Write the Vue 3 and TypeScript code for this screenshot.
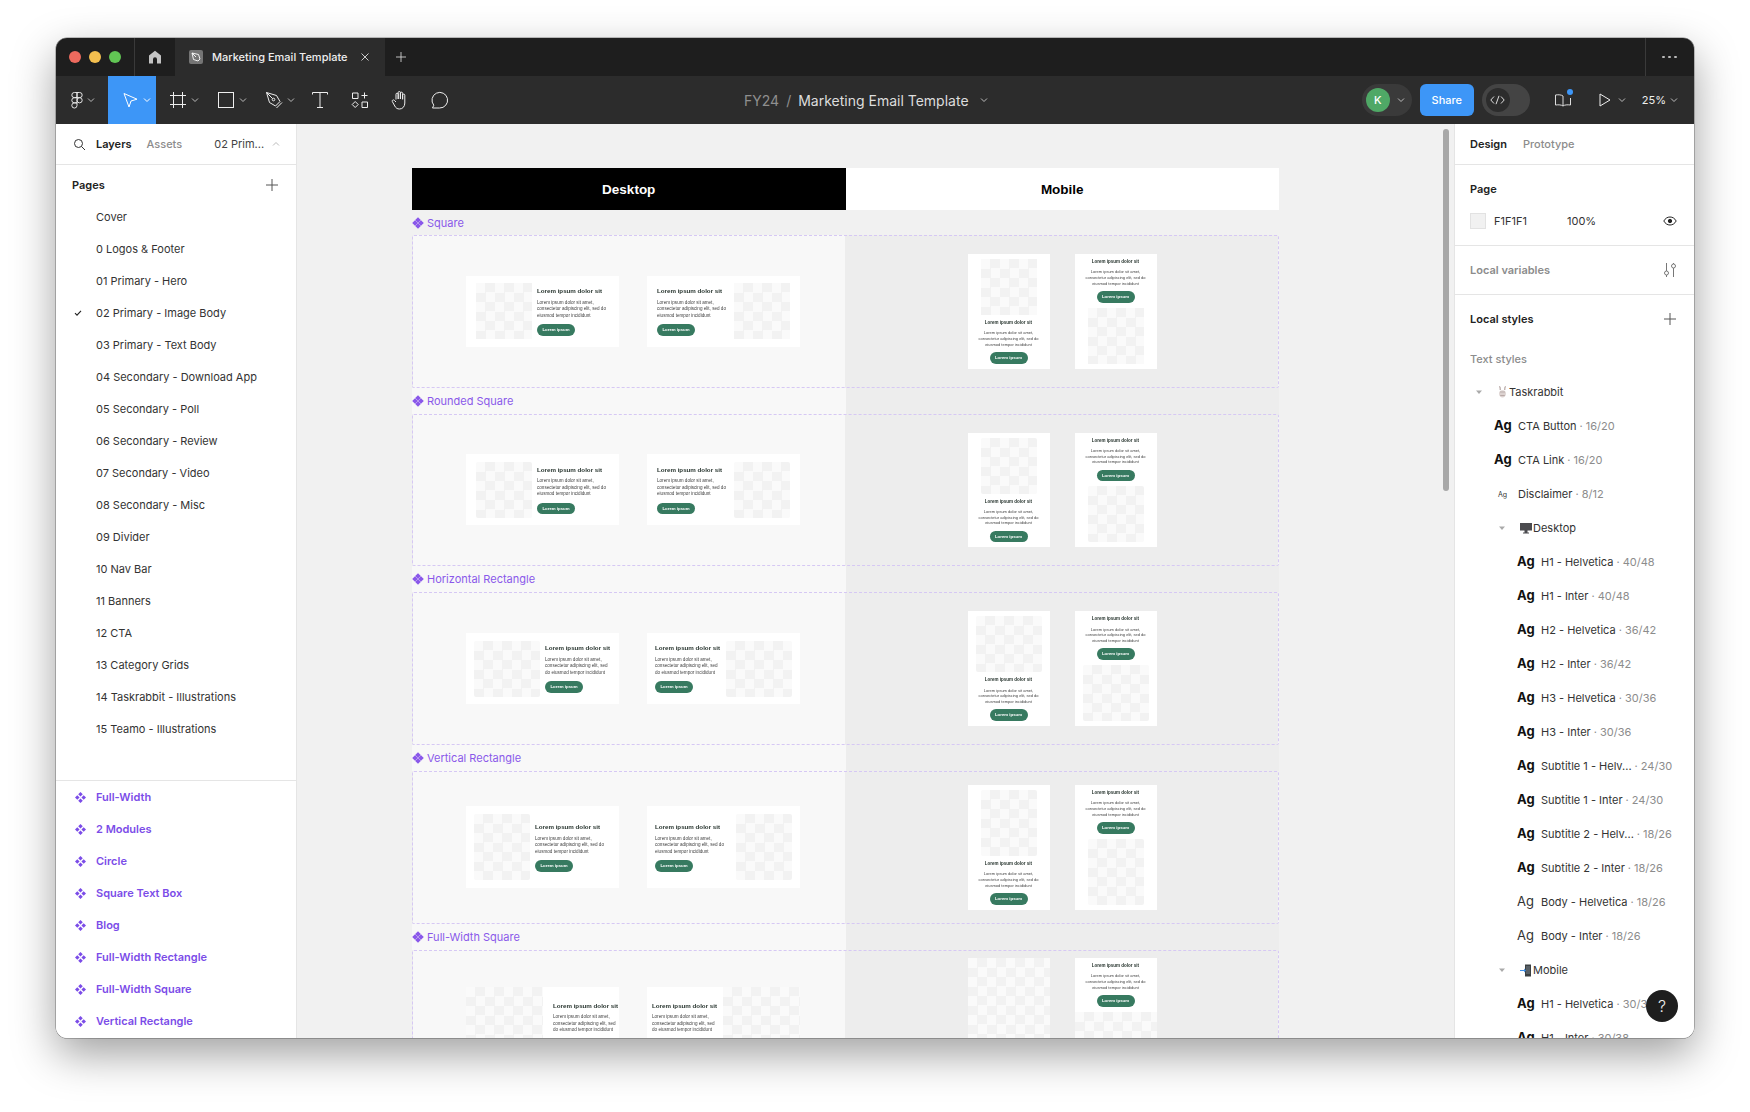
<template>
  <div class="page">
    <svg class="defs" width="0" height="0" aria-hidden="true">
      <symbol id="chev" viewBox="0 0 8 8"><path d="M1 2.5 4 5.5 7 2.5" fill="none" stroke="currentColor" /></symbol>
      <symbol id="plus" viewBox="0 0 12 12"><path d="M6 0v12M0 6h12" fill="none" stroke="currentColor" /></symbol>
      <symbol id="comp" viewBox="0 0 12 12">
        <path d="M6 0 8.500 2.500 6 5 3.500 2.500zM2.500 3.500 5 6 2.500 8.500 0 6zM9.500 3.500 12 6 9.500 8.500 7 6zM6 7 8.500 9.500 6 12 3.500 9.500z" fill="currentColor" />
      </symbol>
      <symbol id="comp-solid" viewBox="0 0 12 12">
        <path d="M6 .2 8.800 3 6 5.800 3.200 3zM3 3.200 5.800 6 3 8.800.2 6zM9 3.200 11.800 6 9 8.800 6.200 6zM6 6.200 8.800 9 6 11.800 3.200 9z" fill="currentColor" />
      </symbol>
      <symbol id="caret" viewBox="0 0 8 8"><path d="M1 2.5h6L4 6z" fill="currentColor" /></symbol>
    </svg>

    <div class="window">
      <header class="titlebar">
        <div class="lights">
          <i class="light light--red"></i>
          <i class="light light--yellow"></i>
          <i class="light light--green"></i>
        </div>
        <div class="home">
          <svg width="14" height="14" viewBox="0 0 14 14"><path d="M7 .8 13 5.6V13.4H9V9.2a2 2 0 0 0-4 0v4.2H1V5.6z" fill="#c4c4c4" /></svg>
        </div>
        <div class="file-tab">
          <span class="file-icon">
            <svg width="10" height="10" viewBox="0 0 10 10"><path d="M1 1 7.5 2.5 9 7 7 9 2.5 7.5zM1 1l4 4" fill="none" stroke="#fff" stroke-width=".9" /></svg>
          </span>
          <span class="file-name">Marketing Email Template</span>
          <svg class="file-close" width="8" height="8" viewBox="0 0 8 8"><path d="M.5.5l7 7M7.5.5l-7 7" stroke="#ccc" /></svg>
        </div>
        <svg class="new-tab" width="10" height="10"><use href="#plus" /></svg>
        <div class="title-menu"><i></i><i></i><i></i></div>
      </header>

      <div class="toolbar">
        <div class="tool tool--logo">
          <svg width="12" height="17" viewBox="0 0 12 18" fill="none" stroke="currentColor" stroke-width="1">
            <path d="M6 .5H3.25a2.75 2.75 0 0 0 0 5.5H6zM6 .5h2.75a2.75 2.75 0 0 1 0 5.5H6zM6 6H3.25a2.75 2.75 0 0 0 0 5.5H6zM6 11.5H3.25A2.75 2.75 0 1 0 6 14.25z" />
            <circle cx="8.75" cy="8.75" r="2.75" />
          </svg>
          <svg class="chev" width="8" height="8"><use href="#chev" /></svg>
        </div>
        <div class="tool tool--active">
          <svg class="ico" width="18" height="18" viewBox="0 0 18 18"><path d="M3 2.5 16 8.2 10 10 8 16z" fill="none" stroke="currentColor" /></svg>
          <svg class="chev" width="8" height="8"><use href="#chev" /></svg>
        </div>
        <div class="tool">
          <svg class="ico" width="18" height="18" viewBox="0 0 18 18"><path d="M4.5 1v16M13.5 1v16M1 4.5h16M1 13.5h16" fill="none" stroke="currentColor" /></svg>
          <svg class="chev" width="8" height="8"><use href="#chev" /></svg>
        </div>
        <div class="tool">
          <svg class="ico" width="18" height="18" viewBox="0 0 18 18"><rect x="1.5" y="1.5" width="15" height="15" fill="none" stroke="currentColor" /></svg>
          <svg class="chev" width="8" height="8"><use href="#chev" /></svg>
        </div>
        <div class="tool">
          <svg class="ico" width="18" height="18" viewBox="0 0 18 18" fill="none" stroke="currentColor">
            <path d="M1.500 1.500 11.500 4.500 15 10.500 10.500 15 4.500 11.500zM1.500 1.500 7.500 7.500M11.500 17l5.500-5.500" />
            <circle cx="8.500" cy="8.500" r="1.300" />
          </svg>
          <svg class="chev" width="8" height="8"><use href="#chev" /></svg>
        </div>
        <div class="tool tool--plain">
          <svg width="16" height="18" viewBox="0 0 16 18"><path d="M.5 3.500V1.500h15v2M8 1.500v15M5 16.500h6" fill="none" stroke="currentColor" /></svg>
        </div>
        <div class="tool tool--plain">
          <svg width="18" height="18" viewBox="0 0 18 18" fill="none" stroke="currentColor">
            <path d="M1.500 2h5.500v5.500H1.500zM13.500 1.500v6M10.500 4.500h6M4.200 10.500 7.200 13.500 4.200 16.500 1.200 13.500zM11 11h5.500v5.500H11z" />
          </svg>
        </div>
        <div class="tool tool--plain">
          <svg width="18" height="20" viewBox="0 0 18 20" fill="none" stroke="currentColor">
            <path d="M5 9.500V4.300a1.100 1.100 0 0 1 2.200 0v4.700M7.200 9V2.600a1.100 1.100 0 0 1 2.200 0V9M9.400 9V3.300a1.100 1.100 0 0 1 2.200 0V9M11.600 9.500V5.200a1.100 1.100 0 0 1 2.200 0V13c0 3.500-2.200 6-5.200 6-2.500 0-3.700-1-4.800-3L1.300 11.500c-.6-1.100 1-2.200 2-1.200L5 12" />
          </svg>
        </div>
        <div class="tool tool--plain">
          <svg width="20" height="20" viewBox="0 0 20 20"><path d="M2.500 18h7a7.800 7.800 0 1 0-5.700-2.800z" fill="none" stroke="currentColor" /></svg>
        </div>

        <div class="doc-title">
          <span class="doc-folder">FY24</span>
          <span class="doc-slash">/</span>
          <span class="doc-name">Marketing Email Template</span>
          <svg class="chev" width="8" height="8"><use href="#chev" /></svg>
        </div>

        <div class="actions">
          <div class="user-pill">
            <span class="avatar">K</span>
            <svg class="chev" width="8" height="8"><use href="#chev" /></svg>
          </div>
          <button class="share" type="button">Share</button>
          <div class="dev-toggle">
            <span class="dev-knob">
              <svg width="15" height="10" viewBox="0 0 15 10"><path d="M4 1.500.8 5 4 8.500M11 1.500 14.200 5 11 8.500M9 .8 6 9.200" fill="none" stroke="#ddd" /></svg>
            </span>
          </div>
          <div class="book">
            <svg width="18" height="14" viewBox="0 0 18 14"><path d="M9 3C7.500 1.800 4.500 1.500 1.500 2v10c3-.4 6-.2 7.500 1 1.500-1.200 4.500-1.400 7.500-1V5M9 3v10" fill="none" stroke="#ddd" /></svg>
            <i></i>
          </div>
          <div class="play">
            <svg width="12" height="14" viewBox="0 0 12 14"><path d="M1 1 11 7 1 13z" fill="none" stroke="#eee" /></svg>
            <svg class="chev" width="8" height="8"><use href="#chev" /></svg>
          </div>
          <div class="zoom">
            <span>25%</span>
            <svg class="chev" width="8" height="8"><use href="#chev" /></svg>
          </div>
        </div>
      </div>

      <div class="workspace">
        <aside class="left">
          <div class="left-tabs">
            <svg class="search" width="13" height="13" viewBox="0 0 13 13"><circle cx="5.500" cy="5.500" r="4" fill="none" stroke="#333" /><path d="M8.500 8.500 12 12" stroke="#333" /></svg>
            <span class="tab tab--on">Layers</span>
            <span class="tab">Assets</span>
            <span class="crumb">02 Prim...</span>
            <svg class="crumb-chev" width="8" height="8"><use href="#chev" /></svg>
          </div>

          <div class="pages">
            <div class="pages-head">
              <span>Pages</span>
              <svg width="12" height="12"><use href="#plus" /></svg>
            </div>
            <div v-for="name in pageNames" :key="name" class="page-row">
              <svg v-if="name === activePage" class="check" width="8" height="8" viewBox="0 0 8 8"><path d="M1 4.200 3 6.200 7 1.800" fill="none" stroke="#222" stroke-width="1.100" /></svg>
              {{ name }}
            </div>
          </div>

          <div class="comp-list">
            <div v-for="name in componentNames" :key="name" class="comp-row">
              <svg width="11" height="11"><use href="#comp" /></svg>
              {{ name }}
            </div>
          </div>
        </aside>

        <main class="canvas">
          <div class="board">
            <div class="switcher">
              <div class="switch switch--on">Desktop</div>
              <div class="switch">Mobile</div>
            </div>

            <section v-for="section in sections" :key="section.title" class="section" :class="`section--${section.kind}`">
              <div class="section-label">
                <svg width="12" height="12"><use href="#comp-solid" /></svg>
                {{ section.title }}
              </div>
              <div class="section-box">
                <div class="half half--desktop">
                  <div v-for="flip in [false, true]" :key="String(flip)" class="module" :class="{ 'module--flip': flip }">
                    <div class="thumb"></div>
                    <div class="copy">
                      <strong>Lorem ipsum dolor sit</strong>
                      <p>Lorem ipsum dolor sit amet, consectetur adipiscing elit, sed do eiusmod tempor incididunt</p>
                      <span class="cta">Lorem ipsum</span>
                    </div>
                  </div>
                </div>
                <div class="half half--mobile">
                  <div v-for="flip in [false, true]" :key="String(flip)" class="module module--mobile" :class="{ 'module--flip': flip }">
                    <div class="thumb"></div>
                    <div class="copy">
                      <strong>Lorem ipsum dolor sit</strong>
                      <p>Lorem ipsum dolor sit amet,<br />consectetur adipiscing elit, sed do<br />eiusmod tempor incididunt</p>
                      <span class="cta">Lorem ipsum</span>
                    </div>
                  </div>
                </div>
              </div>
            </section>
          </div>
          <div class="scrollbar"></div>
        </main>

        <aside class="right">
          <div class="right-tabs">
            <span class="tab tab--on">Design</span>
            <span class="tab">Prototype</span>
          </div>
          <div class="block block--page">
            <div class="block-title">Page</div>
            <div class="fill-row">
              <i class="swatch"></i>
              <span class="fill-hex">F1F1F1</span>
              <span class="fill-pct">100%</span>
              <svg class="eye" width="14" height="10" viewBox="0 0 14 10" fill="none" stroke="#222">
                <path d="M.8 5C2.300 2.300 4.500 1 7 1s4.700 1.300 6.200 4C11.700 7.700 9.500 9 7 9S2.300 7.700.8 5z" />
                <circle cx="7" cy="5" r="1.700" fill="#222" />
              </svg>
            </div>
          </div>
          <div class="block block--row">
            <span class="muted-title">Local variables</span>
            <svg width="14" height="16" viewBox="0 0 14 16" fill="none" stroke="#777">
              <path d="M3.500 1v8M3.500 13v2M10.500 1v1M10.500 6v9" />
              <circle cx="3.500" cy="11" r="2" />
              <circle cx="10.500" cy="4" r="2" />
            </svg>
          </div>
          <div class="styles">
            <div class="styles-head">
              <span>Local styles</span>
              <svg width="12" height="12"><use href="#plus" /></svg>
            </div>
            <div class="styles-sub">Text styles</div>
            <template v-for="row in styleRows" :key="row.id">
              <div v-if="row.group" class="style-group" :class="`style-group--${row.group}`">
                <svg class="tree-caret" width="8" height="8"><use href="#caret" /></svg>
                <svg v-if="row.group === 'rabbit'" class="group-ico" width="11" height="12" viewBox="0 0 11 12">
                  <path d="M2.200.5c.9 0 1.100 1.800 1.100 3.500M8.800.5c-.9 0-1.100 1.800-1.100 3.500" fill="none" stroke="#b9aaa8" stroke-width="1.300" />
                  <path d="M5.500 4.200c2.400 0 3.600 1.700 3.400 3.800-.2 2.200-1.500 3.500-3.400 3.500S2.300 10.200 2.100 8c-.2-2.100 1-3.800 3.400-3.800z" fill="#dcd2d0" />
                  <path d="M3 6h5" stroke="#a89a98" stroke-width=".6" />
                  <path d="M3.200 9.500h4.600" stroke="#b9aaa8" stroke-width="1" />
                </svg>
                <svg v-else-if="row.group === 'desktop'" class="group-ico" width="12" height="11" viewBox="0 0 12 11">
                  <path d="M0 0h12v7.500H0zM4.500 7.500h3V9.500h-3zM3 9.500h6v1H3z" fill="#4b4b4f" />
                </svg>
                <svg v-else class="group-ico" width="12" height="13" viewBox="0 0 12 13">
                  <path d="M5 .5h6v12H5z" fill="#3b4043" />
                  <path d="M6 2h4v8H6z" fill="#586066" />
                  <path d="M0 6h4V4.600L6 6.500 4 8.400V7H0z" fill="#3f8fe8" />
                </svg>
                <span>{{ row.name }}</span>
              </div>
              <div v-else class="style-row" :class="{ 'style-row--deep': row.deep }">
                <span class="ag" :class="`ag--${row.ag}`">Ag</span>
                <span class="style-name">{{ row.name }}</span>
                <span class="style-meta">{{ row.meta }}</span>
              </div>
            </template>
          </div>
          <div class="help">?</div>
        </aside>
      </div>
    </div>
  </div>
</template>

<script setup lang="ts">
type SectionKind = 'square' | 'rounded' | 'wide' | 'tall' | 'full'

interface StyleRow {
  id: number
  name: string
  group?: 'rabbit' | 'desktop' | 'mobile'
  ag?: 'bold' | 'small' | 'light'
  meta?: string
  deep?: boolean
}

const activePage = '02 Primary - Image Body'

const pageNames = [
  'Cover',
  '0 Logos & Footer',
  '01 Primary - Hero',
  activePage,
  '03 Primary - Text Body',
  '04 Secondary - Download App',
  '05 Secondary - Poll',
  '06 Secondary - Review',
  '07 Secondary - Video',
  '08 Secondary - Misc',
  '09 Divider',
  '10 Nav Bar',
  '11 Banners',
  '12 CTA',
  '13 Category Grids',
  '14 Taskrabbit - Illustrations',
  '15 Teamo - Illustrations',
]

const componentNames = [
  'Full-Width',
  '2 Modules',
  'Circle',
  'Square Text Box',
  'Blog',
  'Full-Width Rectangle',
  'Full-Width Square',
  'Vertical Rectangle',
]

const sections: { title: string; kind: SectionKind }[] = [
  { title: 'Square', kind: 'square' },
  { title: 'Rounded Square', kind: 'rounded' },
  { title: 'Horizontal Rectangle', kind: 'wide' },
  { title: 'Vertical Rectangle', kind: 'tall' },
  { title: 'Full-Width Square', kind: 'full' },
]

const rawStyles: Omit<StyleRow, 'id'>[] = [
  { name: 'Taskrabbit', group: 'rabbit' },
  { name: 'CTA Button', ag: 'bold', meta: '· 16/20' },
  { name: 'CTA Link', ag: 'bold', meta: '· 16/20' },
  { name: 'Disclaimer', ag: 'small', meta: '· 8/12' },
  { name: 'Desktop', group: 'desktop' },
  { name: 'H1 - Helvetica', ag: 'bold', meta: '· 40/48', deep: true },
  { name: 'H1 - Inter', ag: 'bold', meta: '· 40/48', deep: true },
  { name: 'H2 - Helvetica', ag: 'bold', meta: '· 36/42', deep: true },
  { name: 'H2 - Inter', ag: 'bold', meta: '· 36/42', deep: true },
  { name: 'H3 - Helvetica', ag: 'bold', meta: '· 30/36', deep: true },
  { name: 'H3 - Inter', ag: 'bold', meta: '· 30/36', deep: true },
  { name: 'Subtitle 1 - Helv...', ag: 'bold', meta: '· 24/30', deep: true },
  { name: 'Subtitle 1 - Inter', ag: 'bold', meta: '· 24/30', deep: true },
  { name: 'Subtitle 2 - Helv...', ag: 'bold', meta: '· 18/26', deep: true },
  { name: 'Subtitle 2 - Inter', ag: 'bold', meta: '· 18/26', deep: true },
  { name: 'Body - Helvetica', ag: 'light', meta: '· 18/26', deep: true },
  { name: 'Body - Inter', ag: 'light', meta: '· 18/26', deep: true },
  { name: 'Mobile', group: 'mobile' },
  { name: 'H1 - Helvetica', ag: 'bold', meta: '· 30/38', deep: true },
  { name: 'H1 - Inter', ag: 'bold', meta: '· 30/38', deep: true },
]

const styleRows: StyleRow[] = rawStyles.map((row, id) => ({ ...row, id }))
</script>

<style>
html,
body {
  margin: 0;
  background: #fff;
}
</style>

<style scoped>
.page {
  height: 1112px;
  box-sizing: border-box;
  padding: 38px 56px 74px;
  overflow: hidden;
  background: #fff;
  font-family: Inter, 'Liberation Sans', sans-serif;
  font-size: 11px;
  color: #333;
}

.defs {
  position: absolute;
}

.window {
  display: flex;
  flex-direction: column;
  height: 1000px;
  overflow: hidden;
  border-radius: 11px;
  background: #f1f1f1;
  box-shadow: 0 0 0 0.5px rgba(0, 0, 0, 0.45), 0 16px 44px rgba(0, 0, 0, 0.38);
}

.titlebar {
  display: flex;
  flex: none;
  align-items: center;
  height: 38px;
  background: #1e1e1e;
}

.lights {
  display: flex;
  flex: none;
  gap: 8px;
  align-items: center;
  box-sizing: border-box;
  width: 79px;
  height: 100%;
  padding-left: 13px;
  border-right: 1px solid #3a3a3a;
}

.light {
  width: 12px;
  height: 12px;
  border-radius: 50%;
}

.light--red { background: #ed6a5e; }
.light--yellow { background: #f4bf4f; }
.light--green { background: #61c554; }

.home {
  display: flex;
  flex: none;
  align-items: center;
  justify-content: center;
  width: 40px;
  height: 100%;
}

.file-tab {
  display: flex;
  flex: none;
  align-items: center;
  box-sizing: border-box;
  width: 210px;
  height: 100%;
  padding-left: 14px;
  background: #2c2c2c;
}

.file-icon {
  display: flex;
  align-items: center;
  justify-content: center;
  width: 14px;
  height: 14px;
  border-radius: 2px;
  background: #757575;
}

.file-name {
  margin-left: 9px;
  font-size: 11px;
  font-weight: 500;
  color: #eee;
  white-space: nowrap;
}

.file-close {
  margin-left: auto;
  margin-right: 16px;
}

.new-tab {
  margin-left: 11px;
  color: #ddd;
}

.title-menu {
  display: flex;
  gap: 3.5px;
  align-items: center;
  box-sizing: border-box;
  width: 49px;
  height: 100%;
  margin-left: auto;
  padding-left: 16px;
  border-left: 1px solid #3a3a3a;
}

.title-menu i {
  width: 2.5px;
  height: 2.5px;
  border-radius: 50%;
  background: #bbb;
}

.toolbar {
  display: flex;
  flex: none;
  align-items: center;
  height: 48px;
  background: #2c2c2c;
  color: #eee;
}

.chev {
  flex: none;
  color: #bbb;
}

.tool {
  display: flex;
  flex: none;
  gap: 4.5px;
  align-items: center;
  box-sizing: border-box;
  width: 48px;
  height: 100%;
  padding-left: 12.5px;
}

.tool--logo {
  width: 52px;
  padding-left: 15px;
  gap: 4px;
}

.tool--active {
  background: #3d96f7;
  color: #fff;
}

.tool--active .chev {
  color: #fff;
}

.tool--plain {
  justify-content: center;
  width: 40px;
  padding-left: 0;
}

.doc-title {
  display: flex;
  gap: 7px;
  align-items: center;
  margin-left: 284px;
  font-size: 14px;
  white-space: nowrap;
}

.doc-folder,
.doc-slash {
  color: #8f8f8f;
}

.doc-name {
  color: #ddd;
  margin-right: 4px;
}

.actions {
  display: flex;
  flex: none;
  align-items: center;
  margin-left: auto;
  padding-right: 16px;
}

.user-pill {
  display: flex;
  gap: 7px;
  align-items: center;
  box-sizing: border-box;
  width: 50px;
  height: 32px;
  padding-left: 4px;
  border-radius: 16px;
  background: #3a3a3a;
}

.avatar {
  width: 24px;
  height: 24px;
  border-radius: 50%;
  background: #4fa866;
  color: #fff;
  font-size: 11px;
  font-weight: 500;
  line-height: 24px;
  text-align: center;
}

.share {
  width: 54px;
  height: 32px;
  margin-left: 8px;
  padding: 0;
  border: 0;
  border-radius: 6px;
  background: #3d96f7;
  color: #fff;
  font: 500 11px Inter, sans-serif;
}

.dev-toggle {
  display: flex;
  align-items: center;
  box-sizing: border-box;
  width: 48px;
  height: 32px;
  margin-left: 8px;
  padding-left: 4px;
  border-radius: 16px;
  background: #444;
}

.dev-knob {
  display: flex;
  align-items: center;
  justify-content: center;
  width: 24px;
  height: 24px;
  border-radius: 50%;
  background: #2c2c2c;
}

.book {
  position: relative;
  display: flex;
  margin-left: 24px;
}

.book i {
  position: absolute;
  top: -4px;
  right: -1px;
  width: 6px;
  height: 6px;
  border-radius: 50%;
  background: #3d96f7;
}

.play {
  display: flex;
  gap: 7px;
  align-items: center;
  margin-left: 27px;
}

.zoom {
  display: flex;
  gap: 4px;
  align-items: center;
  margin-left: 16px;
  font-size: 11px;
  color: #eee;
}

.workspace {
  display: flex;
  flex: 1;
  min-height: 0;
}

.left,
.right {
  position: relative;
  flex: none;
  box-sizing: border-box;
  width: 241px;
  overflow: hidden;
  background: #fff;
}

.left {
  border-right: 1px solid #e5e5e5;
}

.right {
  width: 240px;
  border-left: 1px solid #e5e5e5;
}

.left-tabs,
.right-tabs {
  display: flex;
  align-items: center;
  height: 40px;
  border-bottom: 1px solid #e5e5e5;
}

.search {
  margin-left: 17px;
  margin-right: 10px;
}

.tab {
  margin-right: 15px;
  font-weight: 500;
  color: #8c8c8c;
}

.right-tabs .tab {
  margin-right: 16px;
}

.tab--on {
  font-weight: 600;
  color: #222;
}

.crumb {
  margin-left: 17px;
  color: #444;
}

.crumb-chev {
  margin-left: 8px;
  color: #bbb;
  transform: rotate(180deg);
}

.pages {
  box-sizing: border-box;
  height: 616px;
  border-bottom: 1px solid #e5e5e5;
}

.pages-head {
  display: flex;
  align-items: center;
  justify-content: space-between;
  height: 36px;
  padding: 4px 18px 0 16px;
  box-sizing: border-box;
  font-weight: 600;
  color: #222;
}

.pages-head svg,
.styles-head svg {
  color: #555;
}

.page-row,
.comp-row {
  position: relative;
  display: flex;
  align-items: center;
  height: 32px;
  padding-left: 40px;
  white-space: nowrap;
}

.check {
  position: absolute;
  top: 12px;
  left: 18px;
}

.comp-row {
  gap: 10px;
  padding-left: 19px;
  font-weight: 600;
  color: #7b4ce8;
}

.canvas {
  position: relative;
  flex: 1;
  min-width: 0;
  overflow: hidden;
  background: #f1f1f1;
  padding: 44px 0 0 115px;
}

.board {
  width: 867px;
}

.switcher {
  display: flex;
  height: 42px;
}

.switch {
  display: flex;
  flex: 1;
  align-items: center;
  justify-content: center;
  background: #fff;
  color: #000;
  font: 700 13.5px 'Liberation Sans', sans-serif;
}

.switch--on {
  background: #000;
  color: #fff;
}

.section-label {
  display: flex;
  gap: 3px;
  align-items: center;
  height: 26px;
  font-size: 11px;
  color: #8a58ea;
  background: linear-gradient(to right, #f8f8f8 50%, #ededed 50%);
}

.section:first-of-type .section-label {
  height: 25px;
  background: none;
}

.section-box {
  display: flex;
  box-sizing: border-box;
  height: 152.67px;
  border: 1px dashed #d6c8f4;
  border-radius: 2px;
  background: linear-gradient(to right, #f8f8f8 50%, #ededed 50%);
}

.half {
  display: flex;
  flex: 0 0 50%;
  align-items: center;
  box-sizing: border-box;
}

.half--desktop {
  gap: 28px;
  padding-left: 53px;
}

.half--mobile {
  gap: 25px;
  padding-left: 122px;
}

.module {
  display: flex;
  flex: none;
  gap: 5px;
  align-items: center;
  box-sizing: border-box;
  width: 153px;
  padding: 8px;
  background: #fff;
  font-family: 'Liberation Sans', sans-serif;
  color: #333;
}

.module--flip {
  flex-direction: row-reverse;
}

.thumb {
  flex: none;
  width: 56px;
  height: 56px;
  background-color: #fafafa;
  background-image: conic-gradient(#f2f2f2 25%, transparent 0 50%, #f2f2f2 0 75%, transparent 0);
  background-size: 19px 19px;
  filter: blur(0.4px);
}

.copy {
  display: flex;
  flex: 1;
  flex-direction: column;
  gap: 5px;
  align-items: flex-start;
  min-width: 0;
  filter: blur(0.3px);
}

.copy strong {
  font-size: 6.2px;
  line-height: 7.5px;
  color: #26332d;
  white-space: nowrap;
}

.copy p {
  margin: 0;
  font-size: 4.6px;
  line-height: 6.5px;
  color: #444;
}

.cta {
  width: 38px;
  height: 11.5px;
  border-radius: 6px;
  background: #377a60;
  color: #fff;
  font-size: 4.3px;
  font-weight: 700;
  line-height: 11.5px;
  text-align: center;
}

.module--mobile {
  flex-direction: column;
  width: 82px;
  padding: 5px;
}

.module--mobile.module--flip {
  flex-direction: column-reverse;
}

.module--mobile .copy {
  flex: none;
  gap: 4.75px;
  align-items: center;
  width: 100%;
  text-align: center;
}

.module--mobile .copy strong {
  font-size: 4.5px;
  line-height: 5.5px;
}

.module--mobile .copy p {
  font-size: 4px;
  line-height: 5.67px;
  white-space: nowrap;
}

.section--square .module:not(.module--mobile) {
  padding: 7.5px 10px;
}

.section--rounded .module:not(.module--mobile) {
  padding: 7.5px 10px;
}

.section--rounded .thumb,
.section--wide .thumb,
.section--tall .thumb {
  border-radius: 2px;
}

.section--wide .thumb {
  width: 66px;
}

.section--wide .module:not(.module--mobile) {
  padding: 7.5px 8px;
}

.section--tall .thumb {
  height: 66px;
}

.section--full .thumb {
  width: 77px;
  height: 77px;
}

.section--full .module {
  padding: 0;
}

.section--full .copy {
  padding: 0 3px 0 5px;
}

.section--full .module--mobile {
  gap: 0;
}

.section--full .module--mobile .thumb {
  width: 82px;
  height: 82px;
}

.section--full .module--mobile .copy {
  box-sizing: border-box;
  padding: 5px;
}

.scrollbar {
  position: absolute;
  top: 5px;
  right: 5px;
  width: 6px;
  height: 362px;
  border-radius: 3px;
  background: #a8a8a8;
}

.right-tabs {
  padding-left: 15px;
}

.block {
  border-bottom: 1px solid #e5e5e5;
}

.block--page {
  padding: 16px 0 16px 15px;
}

.block-title,
.styles-head {
  font-weight: 600;
  color: #222;
}

.block-title {
  margin-bottom: 16px;
  line-height: 16px;
}

.fill-row {
  display: flex;
  align-items: center;
  height: 16px;
}

.swatch {
  box-sizing: border-box;
  width: 16px;
  height: 16px;
  border: 1px solid #e2e2e2;
  background: #f1f1f1;
}

.fill-hex {
  width: 73px;
  margin-left: 8px;
}

.fill-pct {
  width: 96px;
}

.block--row {
  display: flex;
  align-items: center;
  justify-content: space-between;
  height: 48px;
  padding: 0 17px 0 15px;
}

.muted-title {
  font-weight: 600;
  color: #8c8c8c;
}

.styles-head {
  display: flex;
  align-items: center;
  justify-content: space-between;
  height: 48px;
  padding: 0 18px 0 15px;
}

.styles-sub {
  height: 32px;
  padding-left: 15px;
  line-height: 32px;
  font-weight: 500;
  color: #8c8c8c;
}

.style-group,
.style-row {
  display: flex;
  align-items: center;
  height: 34px;
  white-space: nowrap;
}

.style-group {
  padding-left: 20px;
}

.style-group--desktop,
.style-group--mobile {
  padding-left: 43px;
}

.tree-caret {
  flex: none;
  margin-right: 14px;
  color: #aaa;
}

.group-ico {
  flex: none;
  margin-right: 1px;
}

.style-row {
  padding-left: 39px;
}

.style-row--deep {
  padding-left: 62px;
}

.ag {
  flex: none;
  width: 24px;
  margin-bottom: 2px;
  font-size: 13px;
  color: #111;
}

.ag--bold {
  font-weight: 700;
}

.ag--small {
  margin-bottom: 0;
  padding-left: 4px;
  box-sizing: border-box;
  font-size: 7px;
  color: #333;
}

.ag--light {
  font-weight: 400;
  color: #333;
}

.style-meta {
  margin-left: 3px;
  color: #8c8c8c;
}

.help {
  position: absolute;
  top: 866px;
  right: 16px;
  width: 32px;
  height: 32px;
  border-radius: 50%;
  background: #1e1e1e;
  color: #eee;
  font-size: 16px;
  font-weight: 300;
  line-height: 32px;
  text-align: center;
}
</style>
